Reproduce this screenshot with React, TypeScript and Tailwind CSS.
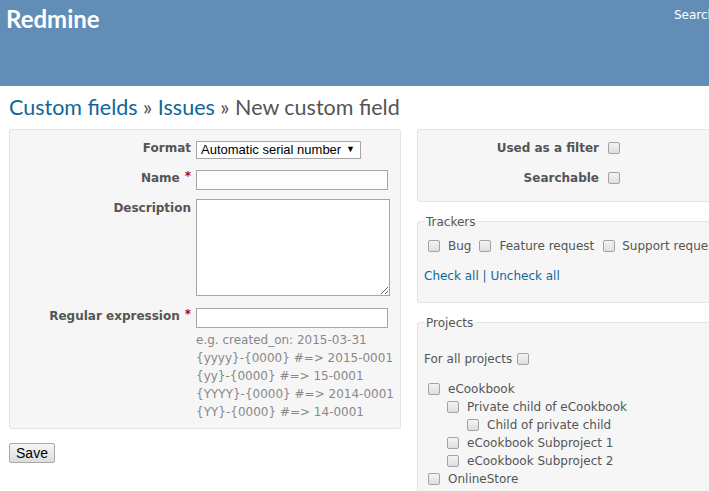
import React from 'react';

const body = "font-['DejaVu_Sans',Verdana,sans-serif]";
const trebuchet = "font-['Lato','Liberation_Sans',sans-serif]";

function Box() {
  return <span className="inline-block w-[12px] h-[12px] shrink-0 rounded-[2px] border border-[#a3a3a3] bg-gradient-to-b from-[#f4f4f4] to-[#dedede]" />;
}

function Req() {
  return <span className="text-[#bb0000] ml-[5px] relative -top-[2px]">*</span>;
}

function Label({ children }: { children: React.ReactNode }) {
  return <div className="w-[181px] shrink-0 text-right font-bold text-[#555] leading-[16px] pt-[1px]">{children}</div>;
}

const hints = [
  'e.g. created_on: 2015-03-31',
  '{yyyy}-{0000} #=> 2015-0001',
  '{yy}-{0000} #=> 15-0001',
  '{YYYY}-{0000} #=> 2014-0001',
  '{YY}-{0000} #=> 14-0001',
];

const projects = [
  { name: 'eCookbook', level: 0 },
  { name: 'Private child of eCookbook', level: 1 },
  { name: 'Child of private child', level: 2 },
  { name: 'eCookbook Subproject 1', level: 1 },
  { name: 'eCookbook Subproject 2', level: 1 },
  { name: 'OnlineStore', level: 0 },
];

const indent = ['pl-[4px]', 'pl-[23px]', 'pl-[43px]'];

export default function App() {
  return (
    <div className={`w-[709px] h-[491px] overflow-hidden bg-white text-[12px] ${body}`}>
      <div className="w-[760px]">
        <div className="h-[86px] bg-[#628db6] flex items-start">
          <h1 className={`pl-[6px] mt-[4px] text-[24px] leading-[30px] font-bold text-white ${trebuchet}`}>Redmine</h1>
          <div className="ml-auto w-[86px] pt-[7px] text-white leading-[16px]">Search:</div>
        </div>

        <div className="px-[9px]">
          <h2 className={`mt-[9px] mb-[10px] text-[21.5px] leading-[24px] text-[#555] ${trebuchet}`}>
            <a className="text-[#116699]">Custom fields</a> » <a className="text-[#116699]">Issues</a> » New custom field
          </h2>

          <div className="flex items-start gap-[16px]">
            <div className="w-[392px] shrink-0">
              <div className="border border-[#e4e4e4] rounded-[3px] bg-[#f6f6f6] pt-[9px] pb-[7px]">
                <div className="flex items-start">
                  <Label>Format</Label>
                  <div className="ml-[5px] mt-[2px] h-[18px] w-[165px] border border-[#a6a6a6] bg-white flex items-center pl-[4px] pr-[5px] font-['Liberation_Sans',Arial,sans-serif] text-[13px] text-black">
                    <span>Automatic serial number</span>
                    <span className="ml-auto text-[9px]">▼</span>
                  </div>
                </div>
                <div className="flex items-start mt-[10px]">
                  <Label>
                    Name<Req />
                  </Label>
                  <div className="ml-[5px] mt-[1px] h-[20px] w-[192px] border border-[#a6a6a6] bg-white" />
                </div>
                <div className="flex items-start mt-[9px]">
                  <Label>Description</Label>
                  <textarea className="ml-[5px] h-[97px] w-[194px] border border-[#a6a6a6] bg-white outline-none" />
                </div>
                <div className="flex items-start mt-[11px]">
                  <Label>
                    Regular expression<Req />
                  </Label>
                  <div className="ml-[5px] mt-[1px] h-[20px] w-[192px] border border-[#a6a6a6] bg-white" />
                </div>
                <div className="pl-[186px] mt-[3px] text-[#888] leading-[18px]">
                  {hints.map((h) => (
                    <div key={h}>{h}</div>
                  ))}
                </div>
              </div>
              <button className="mt-[14px] h-[20px] w-[46px] border border-[#a9a9a9] rounded-[2px] bg-gradient-to-b from-[#f6f6f6] to-[#dddddd] font-['Liberation_Sans',Arial,sans-serif] text-[14px] leading-[18px] text-black">
                Save
              </button>
            </div>

            <div className="flex-1">
              <div className="border border-[#e4e4e4] rounded-[3px] bg-[#f6f6f6] pt-[10px] pb-[15px]">
                <div className="flex items-center">
                  <div className="w-[181px] shrink-0 text-right font-bold text-[#555] leading-[16px]">Used as a filter</div>
                  <span className="ml-[9px] flex"><Box /></span>
                </div>
                <div className="flex items-center mt-[14px]">
                  <div className="w-[181px] shrink-0 text-right font-bold text-[#555] leading-[16px]">Searchable</div>
                  <span className="ml-[9px] flex"><Box /></span>
                </div>
              </div>

              <fieldset className="mt-[11px] border border-[#e4e4e4] rounded-[3px] bg-[#f6f6f6] pl-[6px] pb-[18px]">
                <legend className="px-[2px] pt-[1px] leading-[16px] text-[#555]">Trackers</legend>
                <div className="flex items-center mt-[8px] leading-[16px] text-[#555] whitespace-nowrap">
                  <span className="ml-[4px] flex"><Box /></span>
                  <span className="ml-[8px]">Bug</span>
                  <span className="ml-[8px] flex"><Box /></span>
                  <span className="ml-[8px]">Feature request</span>
                  <span className="ml-[9px] flex"><Box /></span>
                  <span className="ml-[7px]">Support request</span>
                </div>
                <div className="mt-[14px] leading-[16px] text-[#116699]">
                  <a>Check all</a> | <a>Uncheck all</a>
                </div>
              </fieldset>

              <fieldset className="mt-[11px] border border-[#e4e4e4] rounded-[3px] bg-[#f6f6f6] pl-[6px] pb-[20px]">
                <legend className="px-[2px] pt-[1px] leading-[16px] text-[#555]">Projects</legend>
                <div className="flex items-center mt-[20px] leading-[16px] text-[#555]">
                  <span>For all projects</span>
                  <span className="ml-[5px] flex"><Box /></span>
                </div>
                <div className="mt-[13px] text-[#555]">
                  {projects.map((p) => (
                    <div key={p.name} className={`flex items-center h-[18px] ${indent[p.level]}`}>
                      <Box />
                      <span className="ml-[8px]">{p.name}</span>
                    </div>
                  ))}
                </div>
              </fieldset>
            </div>
          </div>
        </div>
      </div>
    </div>
  );
}
